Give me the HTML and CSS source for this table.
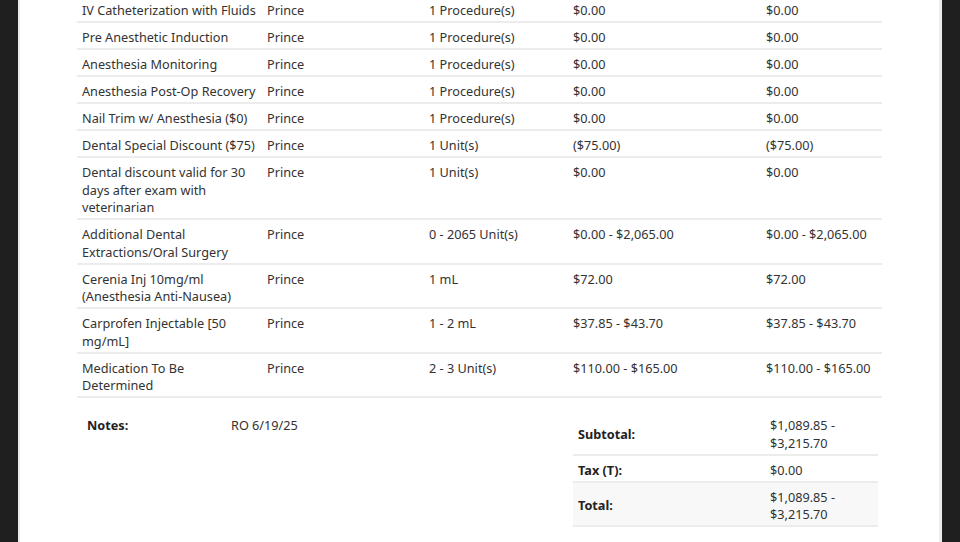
FILE: index.html
```html
<!DOCTYPE html>
<html>
<head>
<meta charset="utf-8">
<link rel="stylesheet" href="styles.css">
</head>
<body>
<div class="page">
  <div class="content">
    <table class="items">
      <colgroup>
        <col class="c1"><col class="c2"><col class="c3"><col class="c4"><col class="c5">
      </colgroup>
      <tbody>
        <tr><td>IV Catheterization with Fluids</td><td>Prince</td><td>1 Procedure(s)</td><td>$0.00</td><td>$0.00</td></tr>
        <tr><td>Pre Anesthetic Induction</td><td>Prince</td><td>1 Procedure(s)</td><td>$0.00</td><td>$0.00</td></tr>
        <tr><td>Anesthesia Monitoring</td><td>Prince</td><td>1 Procedure(s)</td><td>$0.00</td><td>$0.00</td></tr>
        <tr><td>Anesthesia Post-Op Recovery</td><td>Prince</td><td>1 Procedure(s)</td><td>$0.00</td><td>$0.00</td></tr>
        <tr><td>Nail Trim w/ Anesthesia ($0)</td><td>Prince</td><td>1 Procedure(s)</td><td>$0.00</td><td>$0.00</td></tr>
        <tr><td>Dental Special Discount ($75)</td><td>Prince</td><td>1 Unit(s)</td><td>($75.00)</td><td>($75.00)</td></tr>
        <tr><td>Dental discount valid for 30 days after exam with veterinarian</td><td>Prince</td><td>1 Unit(s)</td><td>$0.00</td><td>$0.00</td></tr>
        <tr><td>Additional Dental Extractions/Oral Surgery</td><td>Prince</td><td>0 - 2065 Unit(s)</td><td>$0.00 - $2,065.00</td><td>$0.00 - $2,065.00</td></tr>
        <tr><td>Cerenia Inj 10mg/ml (Anesthesia Anti-Nausea)</td><td>Prince</td><td>1 mL</td><td>$72.00</td><td>$72.00</td></tr>
        <tr><td>Carprofen Injectable [50 mg/mL]</td><td>Prince</td><td>1 - 2 mL</td><td>$37.85 - $43.70</td><td>$37.85 - $43.70</td></tr>
        <tr><td>Medication To Be Determined</td><td>Prince</td><td>2 - 3 Unit(s)</td><td>$110.00 - $165.00</td><td>$110.00 - $165.00</td></tr>
      </tbody>
    </table>

    <div class="footer">
      <div class="notes">
        <div class="notes-label">Notes:</div>
        <div class="notes-text">RO 6/19/25</div>
      </div>
      <table class="totals">
        <colgroup><col class="t1"><col class="t2"></colgroup>
        <tbody>
          <tr><th>Subtotal:</th><td>$1,089.85 -<br>$3,215.70</td></tr>
          <tr><th>Tax (T):</th><td>$0.00</td></tr>
          <tr class="grand"><th>Total:</th><td>$1,089.85 -<br>$3,215.70</td></tr>
        </tbody>
      </table>
    </div>
  </div>
</div>
</body>
</html>
```

FILE: styles.css
```css
html, body {
  margin: 0;
  padding: 0;
  height: 100%;
}
body {
  background: #1f1f1f;
  font-family: "Noto Sans", "Open Sans", sans-serif;
  font-size: 12.7px;
  line-height: 17.5px;
  color: #333;
  overflow: hidden;
}
.page {
  margin: 0 18px;
  height: 542px;
  background: #fff;
  border-left: 2px solid #ececec;
  border-right: 3px solid #ececec;
  overflow: hidden;
}
.content {
  padding: 0 57px 0 57px;
  margin-top: -4px;
}
table {
  border-collapse: collapse;
  table-layout: fixed;
}
.items {
  width: 805px;
}
.c1 { width: 185px; }
.c2 { width: 162px; }
.c3 { width: 144px; }
.c4 { width: 193px; }
.c5 { width: 121px; }
.items td {
  padding: 6px 5px 1.5px 5px;
  vertical-align: top;
  border-bottom: 2px solid #ececec;
  text-align: left;
}
.footer {
  display: flex;
  margin-top: 13px;
}
.notes {
  width: 496px;
  display: flex;
  padding-top: 6px;
  box-sizing: border-box;
}
.notes-label {
  width: 144px;
  padding-left: 10px;
  font-weight: 700;
  color: #222;
}
.totals {
  width: 305px;
}
.t1 { width: 192px; }
.t2 { width: 113px; }
.totals th,
.totals td {
  padding: 6px 5px 1.5px 5px;
  border-bottom: 2px solid #ececec;
  text-align: left;
}
.totals th {
  font-weight: 700;
  color: #222;
  vertical-align: middle;
}
.totals td {
  vertical-align: top;
}
.totals .grand th,
.totals .grand td {
  background: #f8f8f8;
}
```
